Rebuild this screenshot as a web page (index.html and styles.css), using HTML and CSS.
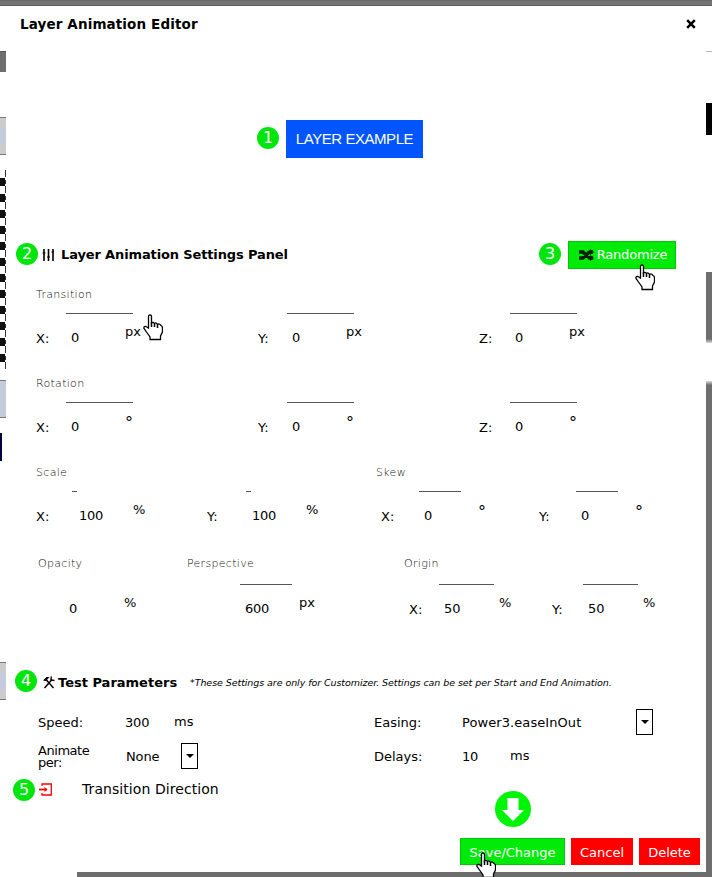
FILE: index.html
```html
<!DOCTYPE html>
<html lang="en">
<head>
<meta charset="utf-8">
<title>Layer Animation Editor</title>
<link rel="stylesheet" href="styles.css">
</head>
<body>
<svg class="defs" width="0" height="0" aria-hidden="true">
  <symbol id="hand" viewBox="0 0 20 27">
    <path d="M5.5 14V2.5Q5.5 1 7 1T8.500 2.500V9Q10 7.500 11.500 9.500Q13 8 14.500 10.500Q16 9 18 11.500Q19.500 12 19.500 14V18L17.500 22V25.500H7V23L3.500 18L1 14.500Q0.500 12 3 12.500Z" fill="#fff" stroke="#000" stroke-width="1.300"/>
    <path d="M8.500 8V13M11.500 9.500V13M14.500 10.500V14" fill="none" stroke="#000" stroke-width="1.500"/>
  </symbol>
</svg>
<div class="page">
  <div class="topbar"></div>
  <div class="left">
    <i class="gray"></i><i class="box b1"></i><i class="checker"></i><i class="box b2"></i><i class="navy"></i><i class="box b3"></i>
  </div>
  <main class="modal">
    <header class="header"><h1>Layer Animation Editor</h1>
      <svg class="close" viewBox="0 0 10 10"><path d="M1.200 1.200L8.800 8.800M8.800 1.200L1.200 8.800" stroke="#000" stroke-width="2.500"/></svg>
    </header>
    <section class="preview"><span class="num">1</span><div class="example">LAYER EXAMPLE</div></section>

    <div class="sechead">
      <span class="num">2</span>
      <svg class="sliders" viewBox="0 0 13 14"><path d="M2 1V13M6.500 1V13M11 1V13" stroke="#000" stroke-width="1.600"/><path d="M0.500 5H3.500M5 9H8M9.500 4H12" stroke="#000" stroke-width="1.200"/></svg>
      <h2 class="t-panel">Layer Animation Settings Panel</h2>
      <span class="num n3">3</span>
      <div class="btn random">
        <svg class="shuffle" viewBox="0 0 15 12"><path d="M0 3H4L10.500 9H14M0 9H4L10.500 3H14" fill="none" stroke="#042004" stroke-width="3.400"/><path d="M11 0L15 3L11 6ZM11 6L15 9L11 12Z" fill="#042004"/></svg>
        <span>Randomize</span>
        <svg class="cursor c-random"><use href="#hand"/></svg>
      </div>
    </div>

    <section class="settings">
      <div class="group">
        <h3 class="t-trans">Transition</h3>
        <div class="fields three">
          <div class="field f1"><hr><label>X:</label><b>0</b><em>px</em><svg class="cursor c-field"><use href="#hand"/></svg></div>
          <div class="field f2"><hr><label>Y:</label><b>0</b><em>px</em></div>
          <div class="field f3"><hr><label>Z:</label><b>0</b><em>px</em></div>
        </div>
      </div>
      <div class="group">
        <h3 class="t-rot">Rotation</h3>
        <div class="fields three">
          <div class="field f1"><hr><label>X:</label><b>0</b><em class="deg">°</em></div>
          <div class="field f2"><hr><label>Y:</label><b>0</b><em class="deg">°</em></div>
          <div class="field f3"><hr><label>Z:</label><b>0</b><em class="deg">°</em></div>
        </div>
      </div>
      <div class="group pair">
        <div><h3>Scale</h3>
          <div class="fields scale">
            <div class="field s1"><hr><label>X:</label><b>100</b><em>%</em></div>
            <div class="field s2"><hr><label>Y:</label><b>100</b><em>%</em></div>
          </div>
        </div>
        <div><h3>Skew</h3>
          <div class="fields skew">
            <div class="field k1"><hr><label>X:</label><b>0</b><em class="deg">°</em></div>
            <div class="field k2"><hr><label>Y:</label><b>0</b><em class="deg">°</em></div>
          </div>
        </div>
      </div>
      <div class="group last">
        <div><h3>Opacity</h3><div class="field o1"><b>0</b><em>%</em></div></div>
        <div><h3>Perspective</h3><div class="field p1"><hr><b>600</b><em>px</em></div></div>
        <div><h3>Origin</h3>
          <div class="fields origin">
            <div class="field g1"><hr><label>X:</label><b>50</b><em>%</em></div>
            <div class="field g2"><hr><label>Y:</label><b>50</b><em>%</em></div>
          </div>
        </div>
      </div>
    </section>

    <div class="sechead test">
      <span class="num">4</span>
      <svg class="tools" viewBox="0 0 12 13"><path d="M1.500 12L9 3.500M3 3.500L10.500 12" stroke="#000" stroke-width="1.500"/><path d="M0 4.500L3.500 1H6.500L3 5Z"/><path d="M8.300 0.500L8 4L11.500 4.500" fill="none" stroke="#000" stroke-width="1.400"/></svg>
      <h2 class="t-test">Test Parameters</h2>
      <p class="note">*These Settings are only for Customizer. Settings can be set per Start and End Animation.</p>
    </div>
    <section class="params">
      <label>Speed:</label><span class="val low">300</span><span class="unit">ms</span>
      <label>Easing:</label><span class="val ease">Power3.easeInOut</span><span class="drop"></span>
      <label class="two">Animate per:</label><span class="val none">None</span><span class="drop near"></span>
      <label>Delays:</label><span class="val low">10</span><span class="unit narrow">ms</span>
    </section>
    <div class="bottom">
      <span class="num">5</span>
      <svg class="enter" viewBox="0 0 13 13"><path d="M3 3V1H12.300V12H3V10" fill="none" stroke="#f00" stroke-width="1.300"/><path d="M0 6.500H8" stroke="#f00" stroke-width="1.800"/><path d="M5.500 4L8.500 6.500L5.500 9Z" fill="#f00"/></svg>
      <span class="direction">Transition Direction</span>
      <svg class="arrow" viewBox="0 0 36 36"><circle cx="18" cy="18" r="18" fill="#00f408"/><path d="M12.500 7H23.500V19H29L18 30L7 19H12.500Z" fill="#fff"/></svg>
    </div>
    <footer class="actions">
      <div class="btn save"><span>Save/Change</span><svg class="cursor c-save"><use href="#hand"/></svg></div>
      <div class="btn red cancel"><span>Cancel</span></div>
      <div class="btn red delete"><span>Delete</span></div>
    </footer>
  </main>
  <div class="right"><i class="line"></i><i class="black"></i><i class="g1"></i><i class="g2"></i></div>
  <div class="foot"></div>
</div>
</body>
</html>
```
FILE: styles.css
```css
* { box-sizing: border-box; margin: 0; padding: 0; }
body { background: #fff; color: #000; font: 13px/18px "DejaVu Sans", Verdana, sans-serif; overflow: hidden; }
.defs { position: absolute; }
.page { width: 712px; height: 877px; overflow: hidden; display: grid; grid-template: 6px 866px 5px / 6px 700px 6px; }
.topbar { grid-column: 1 / 4; background: linear-gradient(#686868 0 1px, #737373 1px 5px, #5c5c5c 5px); }
.foot { grid-column: 1 / 4; margin-left: 77px; background: #6d6d6d; }
i { display: block; }
.left, .right { display: flex; flex-direction: column; }
.gray { margin-top: 45px; height: 21px; background: #6e6e6e; border-top: 1px solid #555; }
.box { height: 38px; background: linear-gradient(#ccc 0 10px, #c3cbdc 10px 27px, #ccc 27px); border: solid #777; border-width: 1px 0; flex: none; }
.b1 { margin-top: 45px; }
.checker { margin-top: 15px; height: 200px; background: repeating-linear-gradient(transparent 0 8px, #111 8px 16px) 0 0 / 5px 100% no-repeat, repeating-linear-gradient(#333 0 7px, transparent 7px 10px, #333 10px 14px, transparent 14px 16px) 5px 0 / 1px 100% no-repeat; }
.b2 { margin-top: 10px; background: #c3cbdc; }
.navy { margin-top: 15px; width: 2px; height: 28px; background: #000040; }
.b3 { margin-top: 201px; }
.right .line { margin-top: 45px; height: 1px; background: #bbb; }
.black { margin-top: 51px; height: 32px; background: #000; }
.right .g1 { margin-top: 137px; height: 71px; background: linear-gradient(#6e6e6e 67px, #ddd); }
.right .g2 { margin-top: 38px; flex: 1; background: linear-gradient(#ddd, #6e6e6e 4px); }

.modal { display: flex; flex-direction: column; background: #fff; }
.header { height: 36px; display: flex; align-items: center; justify-content: space-between; padding: 0 10px 0 14px; }
h1, h2 { font-size: 13px; font-weight: bold; white-space: nowrap; }
h1 { font-size: 13.500px; letter-spacing: .12px; }
.close { width: 10px; height: 10px; }
.num { flex: none; width: 22px; height: 22px; border-radius: 50%; background: #00e60c; color: #fff; text-align: center; font-size: 16px; line-height: 21px; }
.preview { height: 194px; display: flex; align-items: center; padding-left: 251px; gap: 7px; }
.preview .num { margin-top: -2px; }
.example { width: 137px; height: 38px; background: #0055ff; color: #fff; font: 15px/38px "Liberation Sans", Arial, sans-serif; letter-spacing: -.45px; text-align: center; }
.sechead { height: 37px; display: flex; align-items: center; padding-left: 10px; }
.sechead .num { margin-top: -1px; }
.sliders { width: 13px; height: 14px; margin: 0 6px 0 4px; }
.t-panel { width: 478px; letter-spacing: -.13px; }
.n3 { margin-right: 7px; }
.btn { position: relative; display: flex; align-items: center; justify-content: center; background: #00ea08; color: #fff; white-space: nowrap; }
.btn span { padding-top: 1px; }
.random { width: 108px; height: 28px; gap: 3px; border: 1px solid #00c808; }
.random span { letter-spacing: -.2px; }
.random { padding-left: 2px; }
.shuffle { width: 15px; height: 12px; }
.cursor { position: absolute; width: 20px; height: 27px; }
.c-random { left: 66px; top: 22px; }

.settings { height: 397px; padding-top: 13px; }
.group { height: 89px; }
h3 { height: 18px; margin-bottom: 9px; font-size: 11px; font-weight: 200; color: #111; letter-spacing: .3px; }
.t-trans, .t-rot { margin-left: 30px; }
.fields { display: flex; }
.three { padding-left: 30px; }
.field { position: relative; flex: none; display: grid; grid-template-rows: 1px 40px; }
.field hr { grid-area: 1 / 2 / 2 / 4; border: 0; height: 1px; background: #555; width: 67px; }
.field label, .field b, .field em { grid-row: 2; font-weight: normal; font-style: normal; }
.field label { grid-column: 1; padding-top: 16px; }
.field b { grid-column: 2; padding: 15px 0 0 5px; }
.field em { grid-column: 3; padding-top: 9px; }
.field .deg { font-size: 16px; padding-top: 11px; }
.f1 { width: 222px; grid-template-columns: 30px 59px 1fr; }
.f2 { width: 221px; grid-template-columns: 29px 59px 1fr; }
.f3 { width: 160px; grid-template-columns: 31px 59px 1fr; }
.c-field { left: 107px; top: 1px; }
.pair { display: grid; grid-template-columns: 340px 330px; padding-left: 30px; height: 91px; }
.s1 { width: 171px; grid-template-columns: 36px 61px 1fr; }
.s2 { grid-template-columns: 39px 60px 1fr; }
.field.s1 hr, .field.s2 hr { width: 5px; }
.s1 b { padding-left: 7px; }
.s2 b { padding-left: 6px; }
.scale b, .p1 b { letter-spacing: -.3px; }
.skew { padding-left: 5px; }
.k1 { width: 158px; grid-template-columns: 38px 59px 1fr; }
.k2 { grid-template-columns: 37px 59px 1fr; }
.skew .field hr { width: 42px; }
.last { display: grid; grid-template-columns: 149px 217px 300px; padding-left: 32px; }
.last h3 { margin-bottom: 11px; }
.o1 { grid-template-columns: 26px 60px 1fr; }
.p1 { grid-template-columns: 53px 59px 1fr; }
.field.p1 hr { width: 52px; }
.origin { padding-left: 5px; }
.g1 { width: 143px; }
.field.g1 { grid-template-columns: 30px 60px 1fr; }
.field.g2 { grid-template-columns: 31px 60px 1fr; }
.origin .field hr { width: 55px; }

.test { height: 24px; padding-left: 9px; }
.test .num { margin-top: -2px; }
.test h2, .test p { padding-top: 1px; }
.tools { width: 12px; height: 13px; margin: 0 3px 0 6px; }
.t-test { width: 132px; }
.note { font-size: 9.500px; font-style: italic; white-space: nowrap; letter-spacing: -.07px; }
.params { height: 79px; padding: 11px 0 0 32px; display: grid; grid-template: 34px 34px / 87px 49px 200px 88px 174px 60px; align-items: center; }
.params label, .val { padding-top: 1px; }
.params .two { width: 60px; line-height: 12px; letter-spacing: -.45px; padding-top: 2px; }
.params .low { padding-top: 2px; letter-spacing: -.2px; }
.none { padding-left: 1px; letter-spacing: -.15px; }
.ease { letter-spacing: .08px; }
.unit.narrow { margin-left: -126px; }
.drop { width: 17px; height: 26px; border: 1px solid #000; display: grid; place-items: center; }
.drop::after { content: ""; border: solid transparent; border-width: 4px 4px 0; border-top-color: #000; }
.drop.near { margin-left: 7px; }
.bottom { height: 65px; padding-left: 7px; display: flex; align-items: flex-start; }
.bottom .num { margin-top: 6px; }
.enter { width: 13px; height: 13px; margin: 10px 30px 0 4px; }
.direction { width: 413px; margin-top: 7px; font-size: 14px; letter-spacing: .07px; }
.arrow { width: 36px; height: 36px; margin-top: 18px; }
.actions { display: flex; justify-content: flex-end; gap: 6px; padding-right: 6px; }
.actions .btn { height: 27px; }
.actions span { padding-top: 2px; }
.save { width: 105px; border: 1px solid #00c808; }
.btn.red { background: #f00; }
.cancel { width: 62px; }
.delete { width: 61px; }
.c-save { left: 15px; top: 13px; }
```
